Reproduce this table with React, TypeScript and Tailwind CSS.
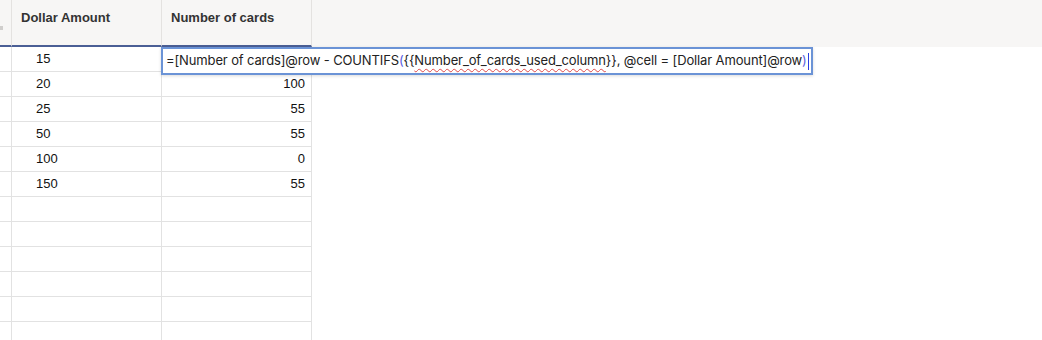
import React from "react";

const dollars = ["15", "20", "25", "50", "100", "150", "", "", "", "", "", ""];
const counts = ["", "100", "55", "55", "0", "55", "", "", "", "", "", ""];

export default function App() {
  return (
    <div className="relative w-[1042px] h-[340px] overflow-hidden bg-white" style={{ fontFamily: '"Liberation Sans", Arial, sans-serif' }}>
      {/* header */}
      <div className="flex h-[47px] bg-[#f7f6f5]">
        <div className="relative w-[12px] border-r border-[#e4e2e0] border-b-2 border-b-[#4b5f95]">
          <div className="absolute left-0 top-[26px] h-[4px] w-[3px] bg-[#d0cecc]" />
        </div>
        <div className="w-[150px] border-r border-[#e4e2e0] border-b-2 border-b-[#4b5f95] pl-[9px] pt-[8px] text-[13px] font-bold text-[#333]">
          Dollar Amount
        </div>
        <div className="w-[150px] border-r border-[#e4e2e0] border-b-2 border-b-[#4b5f95] pl-[9px] pt-[8px] text-[13px] font-bold text-[#333]">
          Number of cards
        </div>
        <div className="flex-1" />
      </div>
      {/* rows */}
      <div className="flex flex-col">
        {dollars.map((d, i) => (
          <div key={i} className="flex h-[25px] text-[13px] text-[#111]">
            <div className="w-[12px] border-r border-b border-[#e2e2e2]" />
            <div className="w-[150px] border-r border-b border-[#e2e2e2] pl-[24px] flex items-center">{d}</div>
            <div className="w-[150px] border-r border-b border-[#e2e2e2] pr-[6px] flex items-center justify-end">{counts[i]}</div>
          </div>
        ))}
      </div>
      {/* formula editor */}
      <div
        className="absolute left-[161px] top-[47px] w-[652px] h-[28px] border-2 border-[#6b93d6] bg-white flex items-center pl-[3px] text-[13px] tracking-[-0.13px] text-[#222] whitespace-nowrap shadow-[0_1px_3px_rgba(0,0,0,0.15)]"
        style={{ fontFamily: 'Inter, "Noto Sans", sans-serif' }}
      >
        <span>=[Number of cards]@row - COUNTIFS</span>
        <span className="text-[#5a5ee0]">(</span>
        <span>{"{{"}</span>
        <span className="underline decoration-wavy decoration-[#e04848] decoration-1 underline-offset-[3px]">Number_of_cards_used_column</span>
        <span>{"}}, @cell = [Dollar Amount]@row"}</span>
        <span className="text-[#5a5ee0]">)</span>
        <span className="ml-[1px] inline-block w-[1px] h-[17px] bg-[#2a3ee0]" />
      </div>
    </div>
  );
}
